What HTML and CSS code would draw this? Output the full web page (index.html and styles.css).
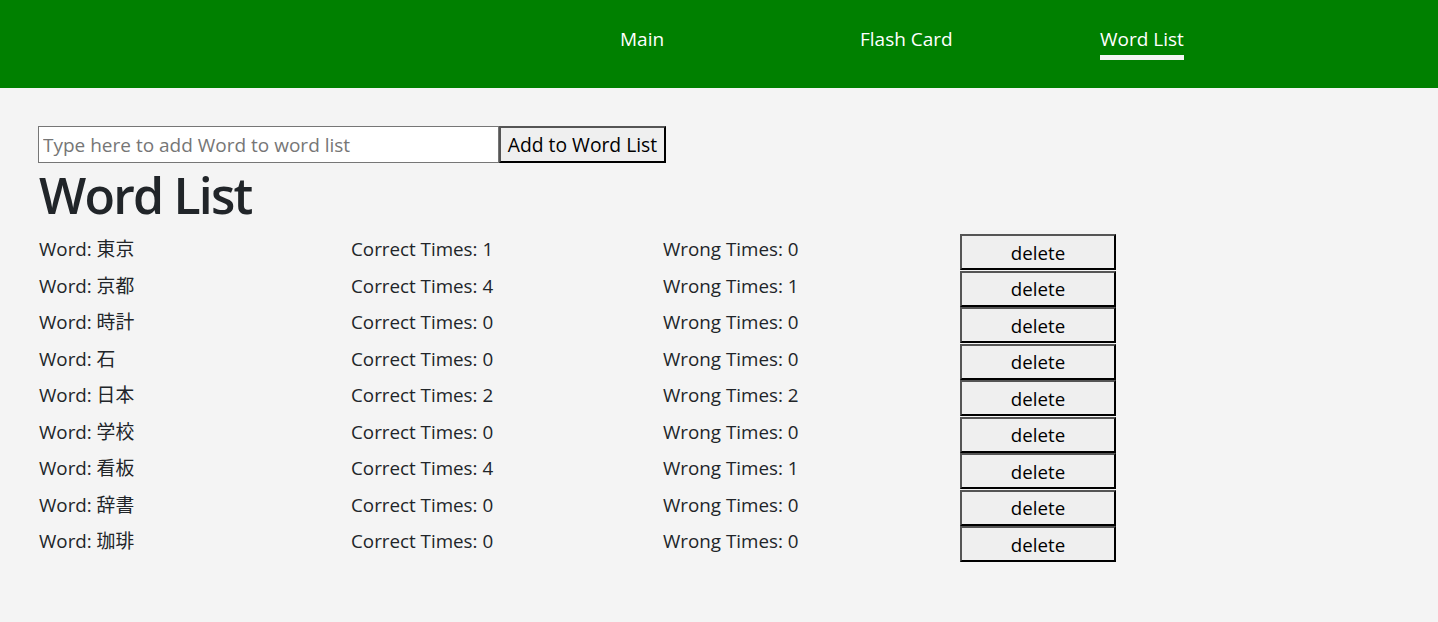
FILE: index.html
```html
<!DOCTYPE html>
<html lang="en">
<head>
<meta charset="utf-8">
<title>Word List</title>
<link rel="stylesheet" href="styles.css">
</head>
<body>
<nav class="topbar">
  <ul class="nav-links">
    <li><a class="nav-link" href="#">Main</a></li>
    <li><a class="nav-link" href="#">Flash Card</a></li>
    <li><a class="nav-link active" href="#">Word List</a></li>
  </ul>
</nav>
<main class="content">
  <form class="add-form">
    <input class="add-input" type="text" placeholder="Type here to add Word to word list">
    <button class="btn add-btn" type="button">Add to Word List</button>
  </form>
  <h1 class="title">Word List</h1>
  <div class="word-list">
    <div class="word-row"><span>Word: 東京</span><span>Correct Times: 1</span><span>Wrong Times: 0</span><button class="btn del-btn" type="button">delete</button></div>
    <div class="word-row"><span>Word: 京都</span><span>Correct Times: 4</span><span>Wrong Times: 1</span><button class="btn del-btn" type="button">delete</button></div>
    <div class="word-row"><span>Word: 時計</span><span>Correct Times: 0</span><span>Wrong Times: 0</span><button class="btn del-btn" type="button">delete</button></div>
    <div class="word-row"><span>Word: 石</span><span>Correct Times: 0</span><span>Wrong Times: 0</span><button class="btn del-btn" type="button">delete</button></div>
    <div class="word-row"><span>Word: 日本</span><span>Correct Times: 2</span><span>Wrong Times: 2</span><button class="btn del-btn" type="button">delete</button></div>
    <div class="word-row"><span>Word: 学校</span><span>Correct Times: 0</span><span>Wrong Times: 0</span><button class="btn del-btn" type="button">delete</button></div>
    <div class="word-row"><span>Word: 看板</span><span>Correct Times: 4</span><span>Wrong Times: 1</span><button class="btn del-btn" type="button">delete</button></div>
    <div class="word-row"><span>Word: 辞書</span><span>Correct Times: 0</span><span>Wrong Times: 0</span><button class="btn del-btn" type="button">delete</button></div>
    <div class="word-row"><span>Word: 珈琲</span><span>Correct Times: 0</span><span>Wrong Times: 0</span><button class="btn del-btn" type="button">delete</button></div>
  </div>
</main>
</body>
</html>
```
FILE: styles.css
```css
* { box-sizing: border-box; }

body {
  margin: 0;
  background: #f4f4f4;
  color: #212529;
  font-family: "Open Sans", "Noto Sans CJK JP", sans-serif;
  font-size: 18.8px;
}

.topbar {
  background: #008000;
  height: 88px;
}

.nav-links {
  list-style: none;
  margin: 0;
  padding: 0 98px 0 0;
  height: 100%;
  display: flex;
  justify-content: flex-end;
}

.nav-links li {
  width: 240px;
  padding-top: 26px;
}

.nav-link {
  display: inline-block;
  color: #ffffff;
  text-decoration: none;
  font-size: 19px;
  line-height: 26px;
  padding-bottom: 3px;
}

.nav-link.active {
  border-bottom: 5px solid #f4f4f4;
}

.content {
  padding: 38px 38px 0 38px;
}

.add-form {
  display: flex;
  margin: 0;
}

.add-input {
  width: 461px;
  height: 37px;
  border: 1px solid #767676;
  background: #ffffff;
  font-family: inherit;
  font-size: 19px;
  padding: 0 4px;
  color: #212529;
}

.add-input::placeholder {
  color: #767676;
}

.btn {
  font-family: inherit;
  color: #000000;
  background: #efefef;
  border-style: solid;
  border-width: 2px;
  border-color: #555555 #000000 #000000 #555555;
  padding: 0;
}

.add-btn {
  width: 167px;
  height: 37px;
  font-size: 19.3px;
}

.title {
  margin: 0 0 7px 0;
  font-size: 50px;
  font-weight: 600;
  letter-spacing: -1.8px;
  line-height: 64px;
  padding-left: 1px;
}

.word-list {
  display: flex;
  flex-direction: column;
}

.word-row {
  display: grid;
  grid-template-columns: 312px 312px 297px 156px;
  height: 36.5px;
  align-items: start;
  padding-left: 1px;
}

.word-row span {
  line-height: 30px;
}

.del-btn {
  height: 36px;
  width: 156px;
  font-size: 18.7px;
}
```
